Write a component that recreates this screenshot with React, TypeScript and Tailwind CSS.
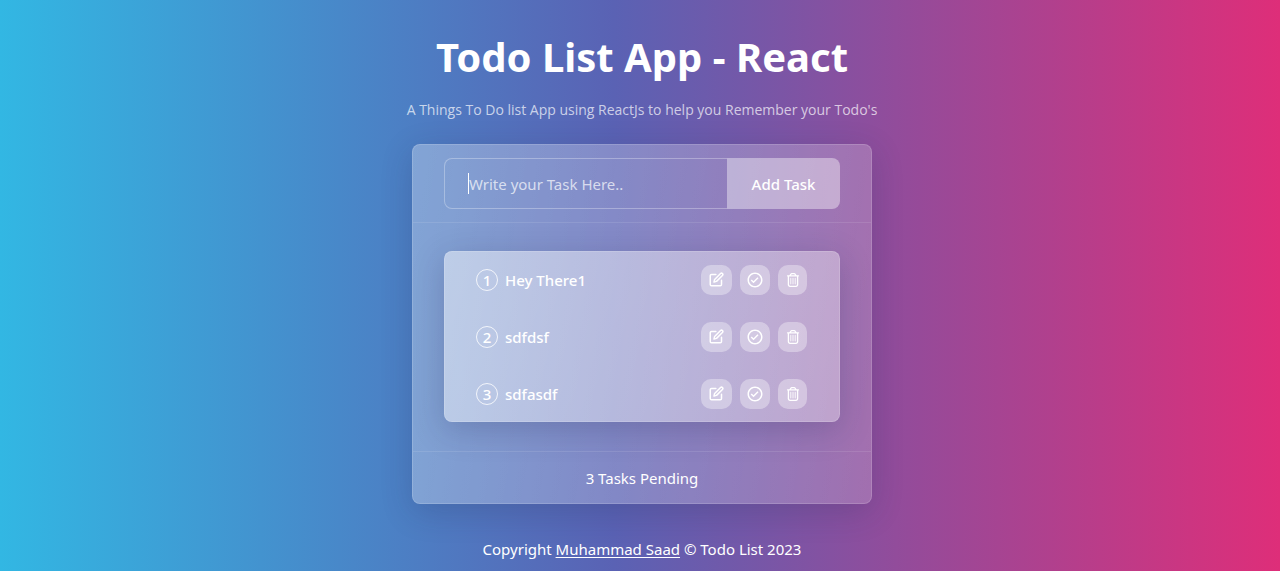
import { useState } from "react";
import type { FormEvent } from "react";
import { FiEdit } from "react-icons/fi";
import { BiCheckCircle } from "react-icons/bi";
import { FaRegTrashCan } from "react-icons/fa6";

type Task = { id: number; title: string };

const initialTasks: Task[] = [
  { id: 1, title: "Hey There1" },
  { id: 2, title: "sdfdsf" },
  { id: 3, title: "sdfasdf" },
];

const iconButton =
  "flex h-[30px] items-center justify-center rounded-[10px] bg-white/35 text-white hover:bg-white/50";

function TaskRow({ task, index, onRemove }: { task: Task; index: number; onRemove: () => void }) {
  return (
    <li className="flex h-[57px] items-center pr-[33px] pl-8 font-medium">
      <span className="flex size-[22px] items-center justify-center rounded-full border border-white/80 leading-5">
        {index + 1}
      </span>
      <span className="ml-[7px] flex-1 truncate">{task.title}</span>
      <div className="flex gap-2">
        <button type="button" aria-label={`Edit ${task.title}`} className={`w-[31px] ${iconButton}`}>
          <FiEdit size={15} strokeWidth={2.4} />
        </button>
        <button type="button" aria-label={`Complete ${task.title}`} className={`w-[30px] ${iconButton}`} onClick={onRemove}>
          <BiCheckCircle size={18} />
        </button>
        <button type="button" aria-label={`Delete ${task.title}`} className={`w-[29px] ${iconButton}`} onClick={onRemove}>
          <FaRegTrashCan size={14} />
        </button>
      </div>
    </li>
  );
}

export default function App() {
  const [tasks, setTasks] = useState(initialTasks);
  const [draft, setDraft] = useState("");

  const remove = (id: number) => setTasks(tasks.filter((t) => t.id !== id));
  const add = (e: FormEvent) => {
    e.preventDefault();
    if (!draft.trim()) return;
    setTasks([...tasks, { id: Date.now(), title: draft.trim() }]);
    setDraft("");
  };

  return (
    <div className="flex min-h-screen flex-col items-center bg-[linear-gradient(90deg,#32b7e3_0%,#5a62b4_48%,#de2e79_100%)] pt-7 pl-1 font-['Noto_Sans','Open_Sans',sans-serif] text-[15px] leading-6 text-white">
      <h1 className="text-center text-[40px] leading-[58px] font-bold">Todo List App - React</h1>
      <p className="mt-3 text-center font-['Open_Sans','Noto_Sans',sans-serif] text-[14px] text-white/70">
        A Things To Do list App using ReactJs to help you Remember your Todo's
      </p>

      <main className="mt-[22px] w-full max-w-[460px] rounded-lg border border-white/15 bg-[linear-gradient(100deg,rgba(255,255,255,0.3),rgba(255,255,255,0.19))] bg-origin-border shadow-[0_8px_32px_rgba(31,38,80,0.2)]">
        <form onSubmit={add} className="flex border-b border-white/10 px-[31px] py-[13px]">
          <div className="relative flex h-[51px] flex-1">
            <input
              aria-label="New task"
              value={draft}
              onChange={(e) => setDraft(e.target.value)}
              placeholder="Write your Task Here.."
              className="peer w-full min-w-0 rounded-l-lg border border-r-0 border-white/30 bg-transparent px-6 text-white caret-white outline-none placeholder:text-white/70"
            />
            <span className="absolute top-[15px] left-6 hidden h-[21px] w-px bg-white peer-placeholder-shown:block" />
          </div>
          <button type="submit" className="w-[113px] rounded-r-lg bg-white/40 font-medium text-white">
            Add Task
          </button>
        </form>

        <div className="px-[31px] pt-7 pb-[29px]">
          <ul className="rounded-lg bg-[linear-gradient(110deg,rgba(255,255,255,0.48),rgba(255,255,255,0.34))] shadow-[inset_0_0_0_1px_rgba(255,255,255,0.15),0_8px_32px_rgba(31,38,80,0.22)]">
            {tasks.map((task, i) => (
              <TaskRow key={task.id} task={task} index={i} onRemove={() => remove(task.id)} />
            ))}
          </ul>
        </div>

        <p className="border-t border-white/10 pt-[14px] pb-[13px] text-center">{tasks.length} Tasks Pending</p>
      </main>

      <footer className="mt-[33px] text-center">
        Copyright{" "}
        <a href="#author" className="underline underline-offset-2">
          Muhammad Saad
        </a>{" "}
        © Todo List 2023
      </footer>
    </div>
  );
}
